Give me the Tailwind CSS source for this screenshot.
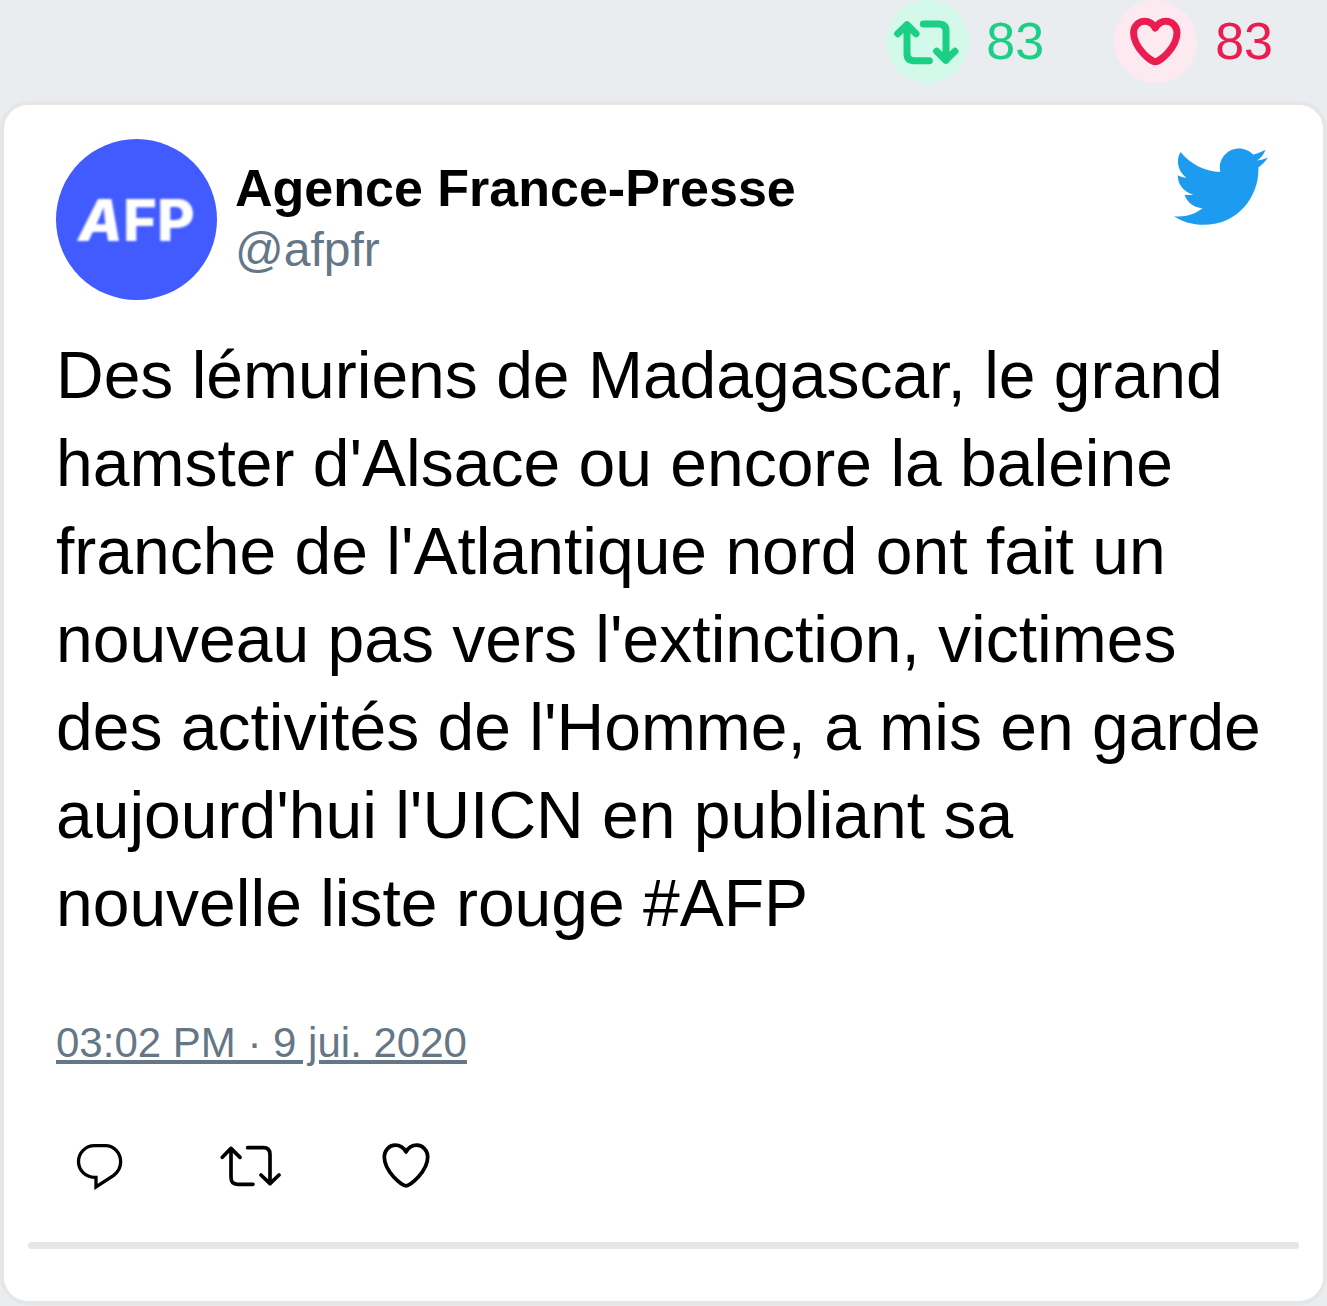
<!DOCTYPE html>
<html lang="fr">
<head>
<meta charset="utf-8">
<meta name="viewport" content="width=device-width, initial-scale=1">
<title>Agence France-Presse</title>
<script src="https://cdn.jsdelivr.net/npm/@tailwindcss/browser@4"></script>
</head>
<body class="bg-[#e9edf0] font-['Liberation_Sans',Arial,sans-serif] text-black">
<header class="flex justify-end gap-[70px] pr-[54px] pb-[18px] text-[52px] leading-[50px]">
  <div class="flex items-center gap-[17px] text-[#1bd085]">
    <span class="flex size-[83px] items-center justify-center rounded-full bg-[#d2f9e9]">
      <svg class="h-11 w-16" viewBox="77 62 192 132" fill="none" stroke="currentColor" stroke-width="21" stroke-linecap="round" stroke-linejoin="round" overflow="visible" aria-hidden="true"><path d="M82 103 110 76l27 27M110 76v88q0 20 22 20h45M159 74h46q22 0 22 21v88M199 156l27 27 28-27"/></svg>
    </span>
    <span class="pb-0.5">83</span>
  </div>
  <div class="flex items-center gap-[18px] text-[#ea1c50]">
    <span class="flex size-[83px] items-center justify-center rounded-full bg-[#fdeaf0]">
      <svg class="size-14" viewBox="0.3 0.4 24 24" fill="none" stroke="currentColor" stroke-width="3" stroke-linejoin="round" aria-hidden="true"><path d="M12 20.9C10.4 20.9 2.7 15 2.7 8.48c0-2.68 2.1-5.01 4.65-5.01C9.5 3.47 11.1 4.7 12 6.4c.9-1.7 2.5-2.93 4.65-2.93 2.55 0 4.65 2.33 4.65 5.01 0 6.52-7.7 12.42-9.3 12.42z"/></svg>
    </span>
    <span class="pb-0.5">83</span>
  </div>
</header>

<article class="mb-px rounded-[28px] border-4 border-[#e6e6e6] bg-white px-6 pt-[34px] pb-[52px]">
  <div class="px-7">
    <div class="flex items-start">
      <div class="flex size-[161px] shrink-0 items-center justify-center rounded-full bg-[#425bff] font-['Inter',sans-serif] text-[58px] leading-none font-extrabold text-white">
        <span class="blur-[1px]"><i>A</i>FP</span>
      </div>
      <div class="ml-[18px] grow pt-[18px]">
        <h1 class="text-[52px] leading-[62px] font-bold">Agence France-Presse</h1>
        <p class="text-[48px] leading-[62px] text-[#657786]">@afpfr</p>
      </div>
      <svg class="mt-[9px] mr-[3px] h-[77px] w-[94px] shrink-0" viewBox="0.937 2.75 22.706 18.41" fill="#1d9bf0" role="img" aria-label="Twitter"><path d="M23.643 4.937c-.835.37-1.732.62-2.675.733.962-.576 1.7-1.49 2.048-2.578-.9.534-1.897.922-2.958 1.13-.85-.904-2.06-1.47-3.4-1.47-2.572 0-4.658 2.086-4.658 4.66 0 .364.042.718.12 1.06-3.873-.195-7.304-2.05-9.602-4.868-.4.69-.63 1.49-.63 2.342 0 1.616.823 3.043 2.072 3.878-.764-.025-1.482-.234-2.11-.583v.06c0 2.257 1.605 4.14 3.737 4.568-.392.106-.803.162-1.227.162-.3 0-.593-.028-.877-.082.593 1.85 2.313 3.198 4.352 3.234-1.595 1.25-3.604 1.995-5.786 1.995-.376 0-.747-.022-1.112-.065 2.062 1.323 4.51 2.093 7.14 2.093 8.57 0 13.255-7.098 13.255-13.254 0-.2-.005-.402-.014-.602.91-.658 1.7-1.477 2.323-2.41z"/></svg>
    </div>
    <p class="mt-[31px] text-[66px] leading-[88px]">Des lémuriens de Madagascar, le grand hamster d'Alsace ou encore la baleine franche de l'Atlantique nord ont fait un nouveau pas vers l'extinction, victimes des activités de l'Homme, a mis en garde aujourd'hui l'UICN en publiant sa nouvelle liste rouge #AFP</p>
    <a href="#" class="mt-[72px] block w-fit text-[42px] leading-[48px] text-[#657786] underline">03:02 PM · 9 jui. 2020</a>
    <div class="mt-[71px] flex items-center px-4">
      <button type="button" aria-label="Répondre"><svg class="size-14" viewBox="36 24 168 168" fill="none" stroke="currentColor" stroke-width="10"><path d="M103 47h33c26 0 46 22 46 49 0 17-9 31-22 41l-52 34v-29h-5a47 47 0 0 1 0-95z"/></svg></button>
      <button type="button" aria-label="Retweeter" class="ml-[92px]"><svg class="h-14 w-[62px]" viewBox="480 26 186 168" fill="none" stroke="currentColor" stroke-width="11" stroke-linecap="round" stroke-linejoin="round"><path d="m487 84 26-27 27 27M513 57v87q0 21 20 21h46M563 55h47q20 0 20 21v87M603 137l27 26 27-26"/></svg></button>
      <button type="button" aria-label="J'aime" class="ml-24"><svg class="size-14" viewBox="0 0.4 24 24" fill="none" stroke="currentColor" stroke-width="1.6" stroke-linejoin="round"><path d="M12 20.9C10.4 20.9 2.7 15 2.7 8.48c0-2.68 2.1-5.01 4.65-5.01C9.5 3.47 11.1 4.7 12 6.4c.9-1.7 2.5-2.93 4.65-2.93 2.55 0 4.65 2.33 4.65 5.01 0 6.52-7.7 12.42-9.3 12.42z"/></svg></button>
    </div>
  </div>
  <hr class="mt-12 h-[7px] rounded-full border-0 bg-[#e6e6e6]">
</article>
</body>
</html>
